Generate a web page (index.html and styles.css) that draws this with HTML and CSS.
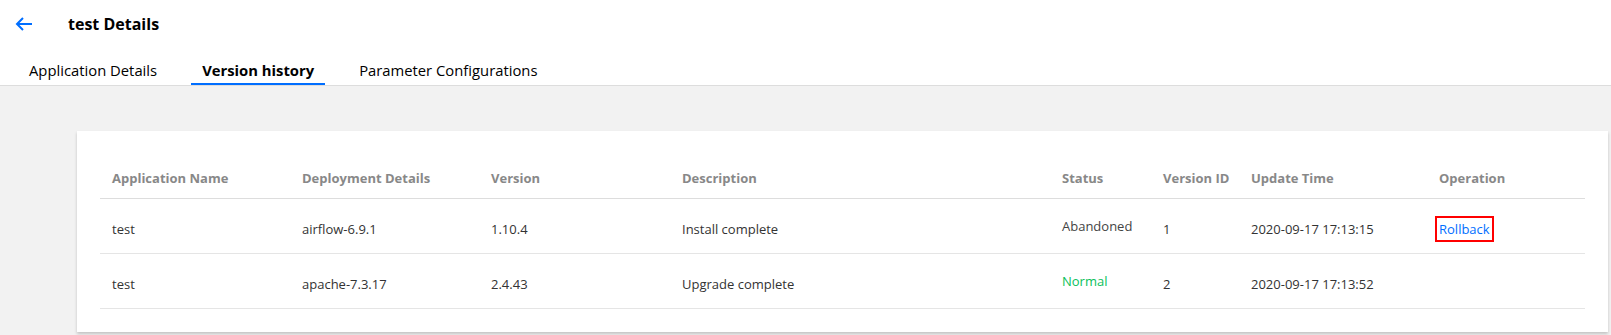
FILE: index.html
```html
<!DOCTYPE html>
<html lang="en">
<head>
  <meta charset="UTF-8">
  <title>test Details</title>
  <link rel="stylesheet" href="styles.css">
</head>
<body>
  <div class="top">
    <div class="page-header">
      <a class="back" href="#">
        <svg width="18" height="14" viewBox="0 0 18 14">
          <path d="M17 7H2M8 1L2 7l6 6" fill="none" stroke="#006eff" stroke-width="2"/>
        </svg>
      </a>
      <div class="page-title">test Details</div>
    </div>
    <div class="tabs">
      <div class="tab">Application Details</div>
      <div class="tab tab-active">Version history</div>
      <div class="tab">Parameter Configurations</div>
    </div>
  </div>

  <div class="content">
    <div class="card">
      <table class="table">
        <colgroup>
          <col style="width: 190px">
          <col style="width: 189px">
          <col style="width: 191px">
          <col style="width: 380px">
          <col style="width: 101px">
          <col style="width: 88px">
          <col style="width: 188px">
          <col>
        </colgroup>
        <thead>
          <tr>
            <th>Application Name</th>
            <th>Deployment Details</th>
            <th>Version</th>
            <th>Description</th>
            <th>Status</th>
            <th>Version ID</th>
            <th>Update Time</th>
            <th>Operation</th>
          </tr>
        </thead>
        <tbody>
          <tr>
            <td>test</td>
            <td>airflow-6.9.1</td>
            <td>1.10.4</td>
            <td>Install complete</td>
            <td><span class="status status-off">Abandoned</span></td>
            <td>1</td>
            <td>2020-09-17 17:13:15</td>
            <td><a class="link link-marked" href="#">Rollback</a></td>
          </tr>
          <tr>
            <td>test</td>
            <td>apache-7.3.17</td>
            <td>2.4.43</td>
            <td>Upgrade complete</td>
            <td><span class="status status-ok">Normal</span></td>
            <td>2</td>
            <td>2020-09-17 17:13:52</td>
            <td></td>
          </tr>
        </tbody>
      </table>
    </div>
  </div>
</body>
</html>
```

FILE: styles.css
```css
html, body {
  height: 100%;
}

body {
  margin: 0;
  padding: 0;
  font-family: "Open Sans", "Noto Sans", sans-serif;
  font-size: 13px;
  color: #333;
  background-color: #f2f2f2;
}

.top {
  background-color: #fff;
}

.page-header {
  display: flex;
  align-items: center;
  height: 48px;
  padding-left: 15px;
}

.back {
  display: flex;
  width: 18px;
  height: 14px;
}

.page-title {
  margin-left: 35px;
  font-size: 16px;
  font-weight: 700;
  color: #000;
}

.tabs {
  display: flex;
  gap: 23px;
  padding-left: 18px;
  height: 37px;
  border-bottom: 1px solid #ddd;
}

.tab {
  padding: 12px 11px 4px 11px;
  line-height: 20px;
  font-size: 14.8px;
  color: #000;
  border-bottom: 2px solid transparent;
}

.tab-active {
  font-weight: 700;
  border-bottom-color: #006eff;
}

.content {
  padding: 45px 3px 0 77px;
}

.card {
  background-color: #fff;
  padding: 26px 23px 23px 23px;
  box-shadow: 0 2px 3px rgba(0, 0, 0, 0.2);
}

.table {
  width: 100%;
  border-collapse: collapse;
  table-layout: fixed;
}

.table th {
  padding: 12px 12px 11px 12px;
  line-height: 18px;
  text-align: left;
  white-space: nowrap;
  font-weight: 700;
  color: #888;
  border-bottom: 1px solid #ddd;
}

.table td {
  padding: 21px 12px 15px 12px;
  line-height: 18px;
  white-space: nowrap;
  border-bottom: 1px solid #e5e5e5;
}

.status {
  position: relative;
  top: -3px;
}

.status-off {
  color: #444;
}

.status-ok {
  color: #0abf5b;
}

.link {
  color: #006eff;
  text-decoration: none;
}

.link-marked {
  outline: 2px solid #f00;
  outline-offset: 2px;
}
```
